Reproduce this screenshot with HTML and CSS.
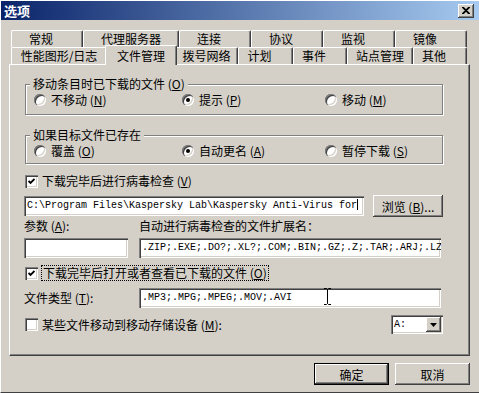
FILE: index.html
```html
<!DOCTYPE html>
<html lang="zh-CN">
<head>
    <meta charset="UTF-8">
    <title>选项</title>
    <link rel="stylesheet" href="styles.css">
</head>
<body>
    <div class="window">
        <div class="titlebar">
            <span class="title">选项</span>
            <button class="close-btn">
                <svg width="8" height="7" viewBox="0 0 8 7"><path d="M0 0 L7 7 M1 0 L8 7 M7 0 L0 7 M8 0 L1 7" stroke="#000" stroke-width="1.2"/></svg>
            </button>
        </div>

        <div class="tabs">
            <div class="tab-row">
                <div class="tab short">常规</div>
                <div class="tab tab-proxy">代理服务器</div>
                <div class="tab short">连接</div>
                <div class="tab short">协议</div>
                <div class="tab short">监视</div>
                <div class="tab short">镜像</div>
            </div>
            <div class="tab-row">
                <div class="tab tab-perf">性能图形/日志</div>
                <div class="tab active">文件管理</div>
                <div class="tab tab-dial">拨号网络</div>
                <div class="tab short tab-plan">计划</div>
                <div class="tab short tab-event">事件</div>
                <div class="tab tab-site">站点管理</div>
                <div class="tab short tab-other">其他</div>
            </div>
        </div>

        <div class="panel">
            <div class="group group-move">
                <div class="group-title">移动条目时已下载的文件 (<u>O</u>)</div>
                <div class="radio-row">
                    <label class="option"><span class="radio"></span><span>不移动 (<u>N</u>)</span></label>
                    <label class="option"><span class="radio checked"></span><span>提示 (<u>P</u>)</span></label>
                    <label class="option"><span class="radio"></span><span>移动 (<u>M</u>)</span></label>
                </div>
            </div>

            <div class="group group-exists">
                <div class="group-title">如果目标文件已存在</div>
                <div class="radio-row">
                    <label class="option"><span class="radio"></span><span>覆盖 (<u>O</u>)</span></label>
                    <label class="option"><span class="radio checked"></span><span>自动更名 (<u>A</u>)</span></label>
                    <label class="option"><span class="radio"></span><span>暂停下载 (<u>S</u>)</span></label>
                </div>
            </div>

            <label class="check-row check-virus">
                <span class="checkbox checked">
                    <svg width="7" height="7" viewBox="0 0 7 7"><path d="M0.5 3 L2.5 5 L6.5 1" stroke="#000" stroke-width="1.8" fill="none"/></svg>
                </span>
                <span>下载完毕后进行病毒检查 (<u>V</u>)</span>
            </label>

            <div class="path-row">
                <div class="field path-field">C:\Program Files\Kaspersky Lab\Kaspersky Anti-Virus for<span class="caret"></span></div>
                <button class="btn browse-btn">浏览 (<u>B</u>)...</button>
            </div>

            <div class="scan-grid">
                <div class="label">参数 (<u>A</u>):</div>
                <div class="label">自动进行病毒检查的文件扩展名：</div>
                <div class="field"></div>
                <div class="field">.ZIP;.EXE;.DO?;.XL?;.COM;.BIN;.GZ;.Z;.TAR;.ARJ;.LZ</div>
            </div>

            <label class="check-row check-open">
                <span class="checkbox checked">
                    <svg width="7" height="7" viewBox="0 0 7 7"><path d="M0.5 3 L2.5 5 L6.5 1" stroke="#000" stroke-width="1.8" fill="none"/></svg>
                </span>
                <span class="focus">下载完毕后打开或者查看已下载的文件 (<u>O</u>)</span>
            </label>

            <div class="type-row">
                <div class="label">文件类型 (<u>T</u>):</div>
                <div class="field type-field">.MP3;.MPG;.MPEG;.MOV;.AVI
                    <svg class="ibeam" width="9" height="17" viewBox="0 0 9 17"><path d="M1 0.5 H3.5 L4.5 1.5 L5.5 0.5 H8 M4.5 1.5 V15.5 M1 16.5 H3.5 L4.5 15.5 L5.5 16.5 H8" stroke="#000" stroke-width="1" fill="none"/></svg>
                </div>
            </div>

            <div class="device-row">
                <label class="check-row">
                    <span class="checkbox"></span>
                    <span>某些文件移动到移动存储设备 (<u>M</u>):</span>
                </label>
                <div class="select">
                    <span class="select-value">A:</span>
                    <span class="select-arrow">
                        <svg width="7" height="4" viewBox="0 0 7 4"><path d="M0 0 H7 L3.5 4 Z" fill="#000"/></svg>
                    </span>
                </div>
            </div>
        </div>

        <div class="actions">
            <button class="btn default-btn">确定</button>
            <button class="btn">取消</button>
        </div>
    </div>
</body>
</html>
```

FILE: styles.css
```css
body {
    margin: 0;
    font-family: "Noto Sans CJK SC", sans-serif;
    font-size: 12px;
    line-height: 14px;
    color: #000;
    background-color: #d4d0c8;
}

u {
    text-decoration: underline;
    text-underline-offset: 1px;
}

.window {
    width: 479px;
    height: 393px;
    box-sizing: border-box;
    background-color: #d4d0c8;
    border-top: 1px solid #fff;
    border-left: 1px solid #fff;
    border-bottom: 1px solid #404040;
    overflow: hidden;
}

/* Title bar */
.titlebar {
    height: 19px;
    display: flex;
    align-items: center;
    justify-content: space-between;
    padding: 0 5px 0 3px;
    background: linear-gradient(to right, #0a246a, #a6caf0);
}

.title {
    color: #fff;
    font-weight: bold;
    font-size: 13px;
}

.close-btn {
    width: 16px;
    height: 14px;
    padding: 0;
    border: none;
    display: flex;
    align-items: center;
    justify-content: center;
    background-color: #d4d0c8;
    box-shadow: inset -1px -1px #404040, inset 1px 1px #fff, inset -2px -2px #808080;
}

/* Tabs */
.tabs {
    margin: 10px 0 0 10px;
}

.tab-row {
    display: flex;
    height: 17px;
}

.tab {
    box-sizing: border-box;
    width: 72px;
    height: 17px;
    line-height: 16px;
    text-align: center;
    border-top: 1px solid #fff;
    border-left: 1px solid #fff;
    border-right: 1px solid #404040;
    border-radius: 2px 2px 0 0;
    box-shadow: inset -1px 0 #808080;
    white-space: nowrap;
}

.tab.short {
    padding-right: 12px;
}

.tab-proxy { width: 96px; }
.tab-perf { width: 96px; }
.tab-dial { width: 63px; }
.tab-plan { width: 55px; }
.tab-event { width: 54px; }
.tab-site { width: 66px; }
.tab-other { width: 54px; }

.tab.active {
    width: 72px;
    height: 20px;
    margin: -2px -2px 0;
    line-height: 19px;
    position: relative;
    z-index: 1;
    background-color: #d4d0c8;
}

/* Panel */
.panel {
    box-sizing: border-box;
    width: 461px;
    height: 292px;
    margin-left: 8px;
    padding: 0 26px 0 15px;
    border-top: 1px solid #fff;
    border-left: 1px solid #fff;
    border-right: 1px solid #404040;
    border-bottom: 1px solid #404040;
    box-shadow: inset -1px -1px #808080;
}

.group {
    border: 1px solid #808080;
    box-shadow: inset 1px 1px #fff, 1px 1px #fff;
    padding-left: 8px;
}

.group-move {
    margin-top: 19px;
    padding-bottom: 5px;
}

.group-exists {
    margin-top: 20px;
    padding-bottom: 3px;
}

.group-title {
    display: table;
    margin: -8px 0 0 -4px;
    padding: 0 3px;
    background-color: #d4d0c8;
}

.radio-row {
    display: grid;
    grid-template-columns: 148px 143px 1fr;
    height: 18px;
    align-items: center;
}

.option {
    display: flex;
    align-items: center;
    gap: 5px;
}

.radio {
    width: 12px;
    height: 12px;
    border-radius: 50%;
    background-color: #fff;
    box-shadow: inset 1px 1px #808080, inset 2px 2px #404040, inset -1px -1px #fff, inset -2px -2px #d4d0c8;
    display: flex;
    align-items: center;
    justify-content: center;
}

.radio.checked::after {
    content: "";
    width: 4px;
    height: 4px;
    border-radius: 50%;
    background-color: #000;
}

.check-row {
    display: flex;
    align-items: center;
    gap: 4px;
    height: 16px;
}

.checkbox {
    box-sizing: border-box;
    width: 13px;
    height: 13px;
    background-color: #fff;
    box-shadow: inset 1px 1px #808080, inset 2px 2px #404040, inset -1px -1px #fff, inset -2px -2px #d4d0c8;
    display: flex;
    align-items: center;
    justify-content: center;
}

.check-virus {
    margin-top: 9px;
}

.check-open {
    margin-top: 7px;
}

.focus {
    outline: 1px dotted #000;
    outline-offset: 0;
    padding: 0 1px;
}

/* Fields */
.field {
    box-sizing: border-box;
    height: 20px;
    padding: 0 3px;
    background-color: #fff;
    box-shadow: inset 1px 1px #808080, inset 2px 2px #404040, inset -1px -1px #fff, inset -2px -2px #d4d0c8;
    font-family: "Liberation Mono", monospace;
    font-size: 10px;
    line-height: 20px;
    white-space: nowrap;
    overflow: hidden;
}

.path-row {
    display: flex;
    align-items: center;
    justify-content: space-between;
    margin: 6px 0 0 -1px;
    height: 22px;
}

.path-field {
    width: 340px;
}

.caret {
    display: inline-block;
    width: 1px;
    height: 11px;
    background-color: #000;
    vertical-align: -2px;
}

.btn {
    height: 22px;
    width: 75px;
    padding: 0;
    border: none;
    background-color: #d4d0c8;
    font-family: "Noto Sans CJK SC", sans-serif;
    font-size: 12px;
    color: #000;
    box-shadow: inset -1px -1px #404040, inset 1px 1px #fff, inset -2px -2px #808080;
}

.browse-btn {
    width: 70px;
}

.default-btn {
    box-shadow: inset 0 0 0 1px #000, inset -2px -2px #404040, inset 2px 2px #fff, inset -3px -3px #808080;
}

.scan-grid {
    display: grid;
    grid-template-columns: 104px 302px;
    column-gap: 11px;
    row-gap: 5px;
    margin: 2px 0 0 -1px;
}

.type-row {
    display: grid;
    grid-template-columns: 104px 302px;
    column-gap: 11px;
    align-items: center;
    margin: 7px 0 0 -1px;
}

.type-field {
    position: relative;
}

.ibeam {
    position: absolute;
    left: 184px;
    top: 0;
}

.device-row {
    display: flex;
    align-items: center;
    justify-content: space-between;
    margin-top: 7px;
    height: 19px;
}

.select {
    box-sizing: border-box;
    width: 52px;
    height: 19px;
    display: flex;
    align-items: center;
    justify-content: space-between;
    padding: 2px;
    background-color: #fff;
    box-shadow: inset 1px 1px #808080, inset 2px 2px #404040, inset -1px -1px #fff, inset -2px -2px #d4d0c8;
}

.select-value {
    font-family: "Liberation Mono", monospace;
    font-size: 10px;
    padding-left: 1px;
}

.select-arrow {
    width: 15px;
    height: 15px;
    display: flex;
    align-items: center;
    justify-content: center;
    background-color: #d4d0c8;
    box-shadow: inset -1px -1px #404040, inset 1px 1px #fff, inset -2px -2px #808080;
}

/* Dialog buttons */
.actions {
    display: flex;
    justify-content: flex-end;
    gap: 6px;
    margin-top: 7px;
    padding-right: 9px;
}
```
